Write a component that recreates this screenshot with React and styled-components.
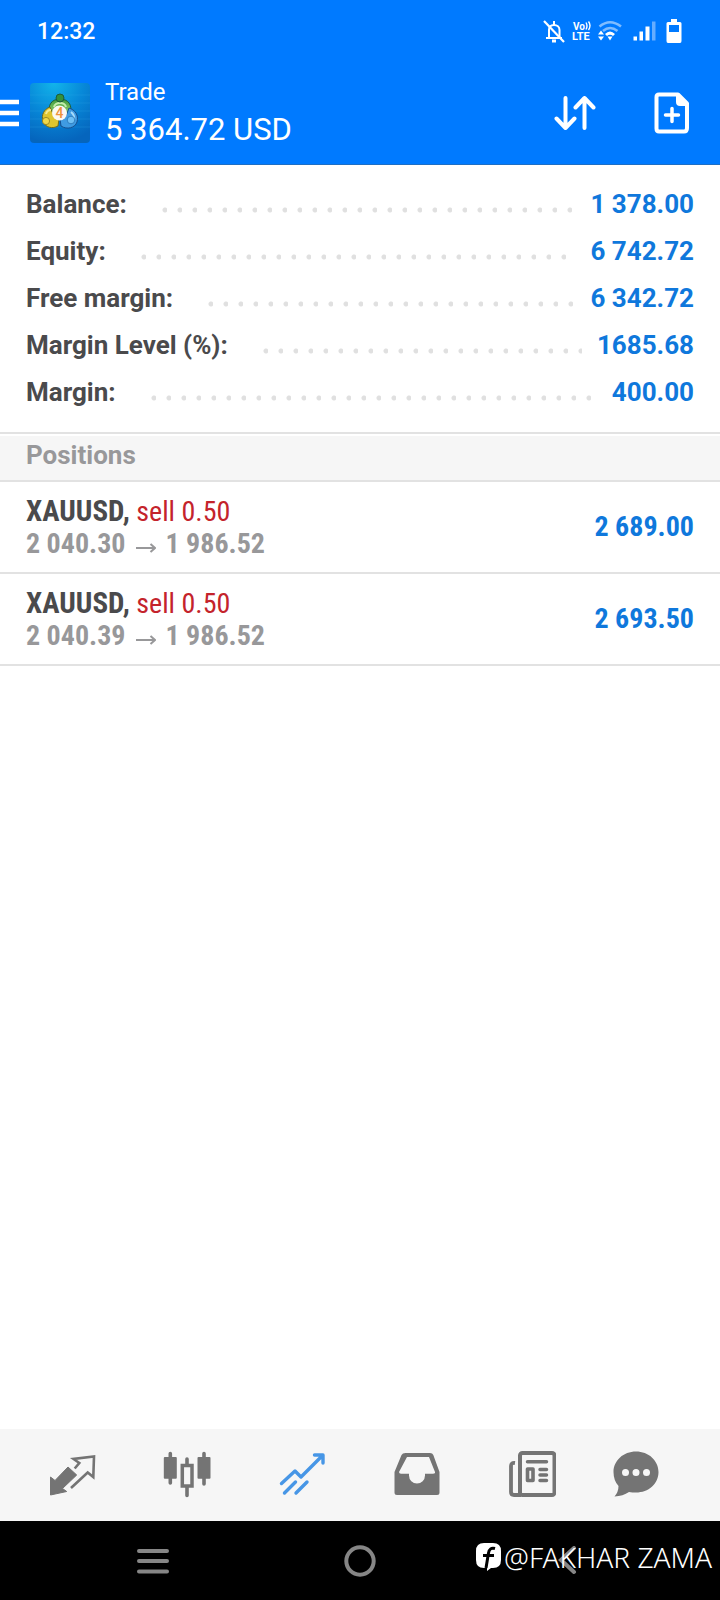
import React from 'react';
import styled, { createGlobalStyle } from 'styled-components';

const GlobalStyle = createGlobalStyle`
  * {
    box-sizing: border-box;
  }

  body {
    margin: 0;
    background: #fff;
    font-family: Roboto, sans-serif;
  }

  button {
    padding: 0;
    border: 0;
    background: none;
    color: inherit;
    font: inherit;
    cursor: pointer;
  }

  svg {
    display: block;
    flex: none;
  }
`;

const Screen = styled.div`
  min-height: 100vh;
  display: flex;
  flex-direction: column;
`;

const Top = styled.header`
  background: #007aff;
  color: #fff;
  border-bottom: 1px solid #1f6fc4;
`;

const StatusBar = styled.div`
  height: 61px;
  padding: 0 38px 0 37px;
  display: flex;
  justify-content: space-between;
  align-items: center;
`;

const Clock = styled.time`
  padding-top: 2px;
  font-size: 23px;
  font-weight: 500;
  line-height: 30px;
`;

const StatusIcons = styled.div`
  display: flex;
  align-items: center;
  gap: 6px;
`;

const AppBar = styled.div`
  height: 103px;
  padding: 0 30px 0 0;
  display: flex;
  align-items: center;
`;

const AppLogo = styled.div`
  margin: 0 15px 0 11px;
`;

const Heading = styled.div`
  flex: 1;
`;

const Title = styled.h1`
  margin: 0;
  font-size: 24px;
  font-weight: 400;
  line-height: 34px;
`;

const Profit = styled.div`
  font-size: 31px;
  line-height: 42px;
`;

const Actions = styled.div`
  display: flex;
  align-items: center;
  gap: 58px;
`;

const Summary = styled.dl`
  margin: 0;
  padding: 15px 26px 17px;
  border-bottom: 2px solid #e2e2e2;
`;

const SummaryRow = styled.div`
  display: flex;
  align-items: center;
  height: 47px;
  font-size: 26px;
  font-weight: 700;
`;

const Label = styled.dt`
  color: #4a4a4c;
`;

const Leader = styled.span`
  flex: 1;
  height: 6px;
  margin: 13px 15px 0 25px;
  background: radial-gradient(
      circle at 13px 3px,
      #e0e0e0 2px,
      transparent 3px
    )
    0 0 / 15px 6px repeat-x;
`;

const Value = styled.dd`
  margin: 0;
  color: #0f78dc;
`;

const SectionTitle = styled.h2`
  margin: 2px 0 0;
  height: 46px;
  padding: 0 26px;
  background: #f6f6f6;
  border-bottom: 2px solid #e2e2e2;
  color: #98989a;
  font-size: 26px;
  font-weight: 700;
  line-height: 38px;
`;

const PositionList = styled.ul`
  flex: 1;
  margin: 0;
  padding: 0;
  list-style: none;
`;

const PositionRow = styled.li`
  display: flex;
  justify-content: space-between;
  align-items: center;
  height: 92px;
  padding: 0 26px;
  border-bottom: 2px solid #e2e2e2;
  font-family: 'Roboto Condensed', 'Liberation Sans Narrow', Roboto, sans-serif;
  font-size: 28px;
  font-weight: 700;
  line-height: 32px;
`;

const Symbol = styled.div`
  color: #4a4a4c;
`;

const Ticker = styled.span`
  font-size: 29px;
`;

const Side = styled.span`
  color: #c4232b;
  font-weight: 400;
`;

const Prices = styled.div`
  display: flex;
  align-items: center;
  gap: 10px;
  color: #98989a;
`;

const TabBar = styled.nav`
  display: flex;
  height: 92px;
  padding: 0 38px 0 14px;
  background: #f6f6f6;
`;

const Tab = styled.button`
  flex: ${(props) => (props.$last ? 4 : 5)};
  display: flex;
  justify-content: center;
  align-items: center;
  color: ${(props) => (props.$active ? '#4796e6' : '#747474')};
`;

const SystemNav = styled.div`
  position: relative;
  display: flex;
  height: 79px;
  padding: 0 50px;
  background: #000;
  color: #868686;
`;

const SystemButton = styled.button`
  flex: 1;
  display: flex;
  justify-content: center;
  align-items: center;
`;

const Watermark = styled.div`
  position: absolute;
  right: 8px;
  top: 16px;
  display: flex;
  align-items: center;
  gap: 2px;
  color: #fff;
  font-family: 'Noto Sans', sans-serif;
  font-size: 28px;
  font-weight: 300;
  line-height: 40px;
  pointer-events: none;
`;

const StatusGlyphs = () => (
  <StatusIcons>
    <svg width='24' height='26' viewBox='-1 -2 24 26' fill='none' stroke='#fff' strokeWidth='2'>
      <path d='M3 18H19M6 17V10C6 7 8 5 11 5C14 5 16.500 7 16.500 10V17M11 5V1' />
      <path d='M9 21H13' strokeWidth='3' />
      <path d='M1 1L21 22' strokeWidth='2.200' />
    </svg>
    <svg width='20' height='28' viewBox='0 0 20 28' fill='#fff'>
      <text x='1' y='13' fontSize='10' fontWeight='700' fontFamily='Roboto'>Vo</text>
      <text x='0' y='23' fontSize='11' fontWeight='700' fontFamily='Roboto'>LTE</text>
      <path d='M14 5.500Q16 9 14 12.500M16.500 4.500Q19.500 8.500 16.500 13' fill='none' stroke='#fff' strokeWidth='1.400' />
    </svg>
    <svg width='29' height='22' viewBox='0 0 29 22' fill='none'>
      <path d='M1.500 6.500Q12 -2 23 6.500M5 11Q12 5 19.500 11' stroke='#7fbcff' strokeWidth='2.600' />
      <path d='M7 14Q12 9 17 14L15 16Q12 13.500 9 16Z' fill='#fff' />
      <path d='M9.500 16.500H14.500L12 20.500ZM0 14.500H6L3 10.500ZM0 16.500H6L3 20.500Z' fill='#fff' />
    </svg>
    <svg width='27' height='22' viewBox='0 0 27 22' fill='#fff'>
      <path d='M.5 16.500H4V20.500H.5ZM6.500 11.500H10V20.500H6.500ZM12.500 6.500H16.500V20.500H12.500Z' />
      <path d='M19 1.500H22.500V20.500H19Z' fill='#66adff' />
    </svg>
    <svg width='16' height='24' viewBox='0 0 16 24'>
      <path d='M5 0H11V3H14Q15.500 3 15.500 4.500V22Q15.500 24 14 24H2Q.5 24 .5 22V4.500Q.5 3 2 3H5Z' fill='#fff' />
      <path d='M3 6H13V13H3Z' fill='#007aff' />
    </svg>
  </StatusIcons>
);

const LogoIcon = () => (
  <svg width='60' height='60' viewBox='0 0 60 60'>
    <defs>
      <radialGradient id='tile' cx='.4' cy='0' r='1'>
        <stop offset='0' stopColor='#12b4ea' />
        <stop offset='.5' stopColor='#0788d8' />
        <stop offset='1' stopColor='#0565bd' />
      </radialGradient>
      <linearGradient id='green' x2='0' y2='1'>
        <stop offset='0' stopColor='#3f9a3c' />
        <stop offset='1' stopColor='#a5dc7c' />
      </linearGradient>
    </defs>
    <rect width='60' height='60' rx='4' fill='url(#tile)' />
    <path d='M0 12H60M0 20H60M0 28H60M0 36H60M0 44H60' stroke='#2fa6e6' strokeOpacity='.25' />
    <path d='M20 31C17 22 22 16 30 16C38 16 43 22 40 31L34 34H25Z' fill='url(#green)' stroke='#1d5c3a' />
    <path d='M20 24C14 26 11 32 13 38C15 45 23 46 28 43L29 36L23 31Z' fill='#dfc52e' stroke='#6d6a20' />
    <path d='M39 25C45 27 49 32 47 39C45 45 37 47 31 43L30 36L36 33Z' fill='#3f9be2' stroke='#164f8e' />
    <path d='M24 24Q25 20 30 20Q35 20 36 24' fill='none' stroke='#c4edac' strokeWidth='2' />
    <path d='M16 31Q17 27 21 27' fill='none' stroke='#f6ea90' strokeWidth='2' />
    <path d='M41 29Q45 32 44 37' fill='none' stroke='#a8dcfa' strokeWidth='2' />
    <circle cx='30' cy='15' r='4' fill='#34913a' stroke='#1d5c3a' />
    <circle cx='16' cy='38' r='3.600' fill='#efd84a' stroke='#8a7a1c' strokeWidth='.8' />
    <circle cx='41' cy='37' r='3.800' fill='#6fc0f4' stroke='#2271b5' strokeWidth='.8' />
    <circle cx='29.500' cy='30' r='7.500' fill='#fbf8f2' />
    <text x='29.500' y='35' textAnchor='middle' fontFamily='Roboto' fontSize='14' fontWeight='500' fill='#f0923a'>4</text>
  </svg>
);

const MenuIcon = () => (
  <svg width='19' height='28' viewBox='0 0 19 28'>
    <path d='M0 3H19M0 14H19M0 25H19' stroke='#fff' strokeWidth='4.500' />
  </svg>
);

const SortIcon = () => (
  <svg width='42' height='36' viewBox='0 0 42 36' fill='none' stroke='#fff' strokeWidth='4' strokeLinecap='round' strokeLinejoin='round'>
    <path d='M11.500 3V33M2.500 23.500L11.500 33L20.500 23.500M30.500 33V3M21.500 12.500L30.500 3L39.500 12.500' />
  </svg>
);

const NewOrderIcon = () => (
  <svg width='36' height='42' viewBox='0 0 36 42' fill='none' stroke='#fff' strokeWidth='4' strokeLinejoin='round'>
    <path d='M5 2.500H24L33 11.500V36Q33 39.500 30 39.500H5Q2.500 39.500 2.500 36.500V5Q2.500 2.500 5 2.500Z' />
    <path d='M23 3L33 13H26Q23 13 23 10Z' fill='#fff' strokeWidth='2' />
    <path d='M18 16.500V29.500M11.500 23H24.500' strokeLinecap='round' strokeWidth='3.500' />
  </svg>
);

const tabs = [
  {
    name: 'Quotes',
    icon: (
      <>
        <path d='M20 16L28.700 24L14.500 37.500L18.700 40.500L2.500 44V26L7 29.500Z' fill='currentColor' />
        <path d='M26.700 17.500L31.300 12L25.500 8L46 5.500L45.300 26L39.700 21.500L23 37' strokeWidth='2.600' />
      </>
    ),
  },
  {
    name: 'Charts',
    icon: (
      <>
        <path d='M7.300 2.500V32M24 8V44.500M41 2.500V33' strokeWidth='3.600' strokeLinecap='round' />
        <rect x='.8' y='6' width='13' height='21.700' rx='1' fill='currentColor' stroke='none' />
        <rect x='34.500' y='6' width='13' height='21.700' rx='1' fill='currentColor' stroke='none' />
        <rect x='19.300' y='14.500' width='9.700' height='20.500' fill='#f6f6f6' strokeWidth='3.500' />
      </>
    ),
  },
  {
    name: 'Trade',
    icon: (
      <g strokeWidth='3.400' strokeLinecap='round' strokeLinejoin='round'>
        <path d='M3.500 32.500L17 20L23 26L44 5M36.500 4H45V12' />
        <path d='M6.500 42L17.500 31M18 42L29 31' />
      </g>
    ),
  },
  {
    name: 'History',
    icon: (
      <path
        d='M12.500 2H37Q39.500 2 40.300 4L46.500 21V41.500Q46.500 44 44 44H4Q1.500 44 1.500 41.500V21L8.500 4Q9.500 2 12.500 2ZM14 6L6 21Q6 22.700 8 22.700H16V24.500A8 8 0 0 0 32 24.500V22.700H40Q42.500 22.700 42 21L36 6Z'
        fill='currentColor'
        fillRule='evenodd'
        stroke='none'
      />
    ),
  },
  {
    name: 'News',
    icon: (
      <>
        <rect x='12' y='2' width='34.500' height='42' rx='2.500' strokeWidth='4' />
        <path d='M7 12Q3 11.500 3 15V41Q3 44 6 44H13' strokeWidth='3.800' />
        <path d='M19.500 10.700H38.500M32 18.500H38.500M32 24H38.500M32 29.500H38.500' strokeWidth='3.500' strokeLinecap='round' />
        <rect x='19.500' y='18' width='5.500' height='11.500' strokeWidth='3.600' strokeLinejoin='round' />
      </>
    ),
  },
  {
    name: 'Messages',
    icon: (
      <>
        <path
          d='M24 .5C36.500 .5 46.500 9.500 46.500 21C46.500 33 36.500 41.500 24 41.500Q20.500 41.500 17 41Q11 45 2.500 45.500Q6.500 41 6.500 35Q1.500 29.500 1.500 21C1.500 9.500 11.500 .5 24 .5Z'
          fill='currentColor'
          stroke='none'
        />
        <path d='M13.500 21.500H13.510M24 21.500H24.010M34.500 21.500H34.510' stroke='#f6f6f6' strokeWidth='7' strokeLinecap='round' />
      </>
    ),
  },
];

const summary = [
  { label: 'Balance:', value: '1 378.00' },
  { label: 'Equity:', value: '6 742.72' },
  { label: 'Free margin:', value: '6 342.72' },
  { label: 'Margin Level (%):', value: '1685.68' },
  { label: 'Margin:', value: '400.00' },
];

const positions = [
  { id: 1, symbol: 'XAUUSD', side: 'sell 0.50', open: '2 040.30', current: '1 986.52', profit: '2 689.00' },
  { id: 2, symbol: 'XAUUSD', side: 'sell 0.50', open: '2 040.39', current: '1 986.52', profit: '2 693.50' },
];

const Position = ({ info }) => (
  <PositionRow>
    <div>
      <Symbol>
        <Ticker>{info.symbol},</Ticker> <Side>{info.side}</Side>
      </Symbol>
      <Prices>
        <span>{info.open}</span>
        <svg width='20' height='20' viewBox='0 0 20 20' fill='none' stroke='currentColor' strokeWidth='2'>
          <path d='M0 14H18M14.500 10L19 14L14.500 18' />
        </svg>
        <span>{info.current}</span>
      </Prices>
    </div>
    <Value as='div'>{info.profit}</Value>
  </PositionRow>
);

const App = () => {
  return (
    <Screen>
      <GlobalStyle />
      <Top>
        <StatusBar>
          <Clock>12:32</Clock>
          <StatusGlyphs />
        </StatusBar>
        <AppBar>
          <button aria-label='Menu'>
            <MenuIcon />
          </button>
          <AppLogo>
            <LogoIcon />
          </AppLogo>
          <Heading>
            <Title>Trade</Title>
            <Profit>5 364.72 USD</Profit>
          </Heading>
          <Actions>
            <button aria-label='Sort'>
              <SortIcon />
            </button>
            <button aria-label='New order'>
              <NewOrderIcon />
            </button>
          </Actions>
        </AppBar>
      </Top>
      <Summary>
        {summary.map((row) => (
          <SummaryRow key={row.label}>
            <Label>{row.label}</Label>
            <Leader />
            <Value>{row.value}</Value>
          </SummaryRow>
        ))}
      </Summary>
      <SectionTitle>Positions</SectionTitle>
      <PositionList>
        {positions.map((info) => (
          <Position key={info.id} info={info} />
        ))}
      </PositionList>
      <TabBar>
        {tabs.map((tab, index) => (
          <Tab
            key={tab.name}
            aria-label={tab.name}
            $active={tab.name === 'Trade'}
            $last={index === tabs.length - 1}
          >
            <svg width='48' height='48' viewBox='0 0 48 48' fill='none' stroke='currentColor'>
              {tab.icon}
            </svg>
          </Tab>
        ))}
      </TabBar>
      <SystemNav>
        <SystemButton aria-label='Recent apps'>
          <svg width='34' height='30' viewBox='0 0 34 30' stroke='currentColor' strokeWidth='4' strokeLinecap='round'>
            <path d='M3 5H31M3 15H31M3 25.500H31' />
          </svg>
        </SystemButton>
        <SystemButton aria-label='Home'>
          <svg width='32' height='32' viewBox='0 0 32 32' fill='none' stroke='currentColor' strokeWidth='4'>
            <circle cx='16' cy='16' r='13.700' />
          </svg>
        </SystemButton>
        <SystemButton aria-label='Back'>
          <svg width='20' height='30' viewBox='0 0 20 30' fill='none' stroke='currentColor' strokeWidth='4' strokeLinecap='round'>
            <path d='M17 2L4 14L17 26' />
          </svg>
        </SystemButton>
        <Watermark>
          <svg width='26' height='28' viewBox='0 0 26 28'>
            <path d='M8 0H17Q25 0 25 8V17Q25 25 17 25H15L11 28L11 25H8Q0 25 0 17V8Q0 0 8 0Z' fill='#fff' />
            <path d='M19 5.500Q13.500 4 12.500 10L10 25M7 12.500H18' fill='none' stroke='#000' strokeWidth='3' />
          </svg>
          <span>@FAKHAR ZAMA</span>
        </Watermark>
      </SystemNav>
    </Screen>
  );
};

export default App;
